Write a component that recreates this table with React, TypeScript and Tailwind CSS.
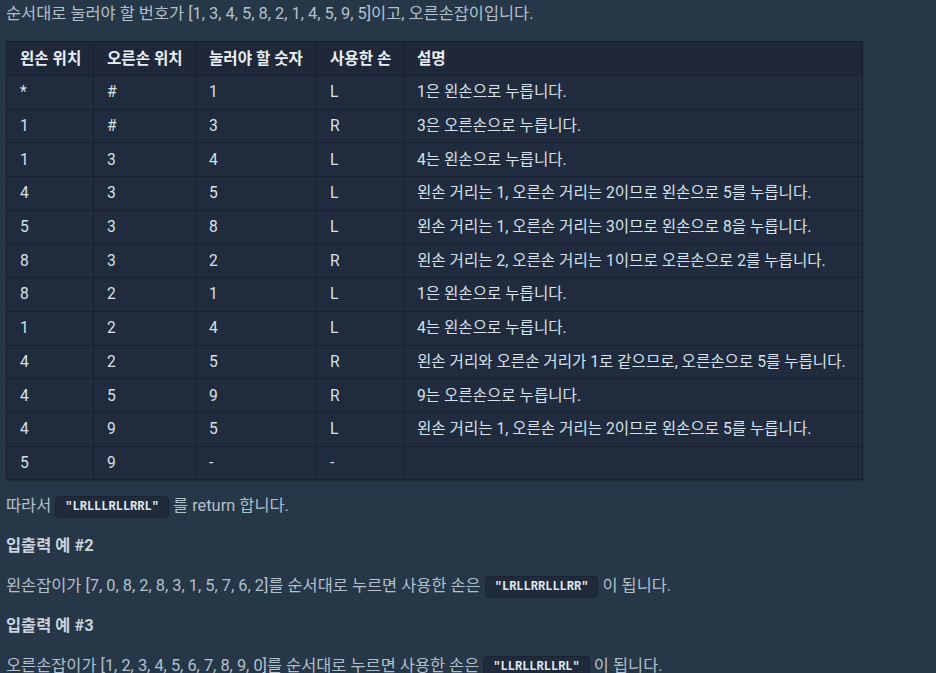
import { Fragment } from 'react'

const rows: string[][] = [
  ['*', '#', '1', 'L', '1은 왼손으로 누릅니다.'],
  ['1', '#', '3', 'R', '3은 오른손으로 누릅니다.'],
  ['1', '3', '4', 'L', '4는 왼손으로 누릅니다.'],
  ['4', '3', '5', 'L', '왼손 거리는 1, 오른손 거리는 2이므로 왼손으로 5를 누릅니다.'],
  ['5', '3', '8', 'L', '왼손 거리는 1, 오른손 거리는 3이므로 왼손으로 8을 누릅니다.'],
  ['8', '3', '2', 'R', '왼손 거리는 2, 오른손 거리는 1이므로 오른손으로 2를 누릅니다.'],
  ['8', '2', '1', 'L', '1은 왼손으로 누릅니다.'],
  ['1', '2', '4', 'L', '4는 왼손으로 누릅니다.'],
  ['4', '2', '5', 'R', '왼손 거리와 오른손 거리가 1로 같으므로, 오른손으로 5를 누릅니다.'],
  ['4', '5', '9', 'R', '9는 오른손으로 누릅니다.'],
  ['4', '9', '5', 'L', '왼손 거리는 1, 오른손 거리는 2이므로 왼손으로 5를 누릅니다.'],
  ['5', '9', '-', '-', ''],
]

const headers = ['왼손 위치', '오른손 위치', '눌러야 할 숫자', '사용한 손', '설명']

function Code({ children }: { children: string }) {
  return (
    <code className="inline-block px-[9px] h-[22px] leading-[21px] align-middle rounded-[4px] border border-[#1a2433] bg-[#1f2a3b] text-[#dfe7ee] text-[12px] font-semibold font-['Liberation_Mono',monospace]">
      {children}
    </code>
  )
}

export default function App() {
  return (
    <div className="min-h-[673px] w-full bg-[#263747] text-[#b2c0cc] text-[16.4px] leading-[24px] font-['Roboto','Noto_Sans_CJK_KR',sans-serif] pl-[6px] pt-[2px]">
      <p>순서대로 눌러야 할 번호가 [1, 3, 4, 5, 8, 2, 1, 4, 5, 9, 5]이고, 오른손잡이입니다.</p>

      <table className="mt-[15px] w-[857px] table-fixed border-collapse bg-[#202b3d] text-[#d7e2eb] text-[15.6px] shadow-[0_1px_2px_rgba(0,0,0,0.25)]">
        <colgroup>
          <col className="w-[87px]" />
          <col className="w-[102px]" />
          <col className="w-[121px]" />
          <col className="w-[87px]" />
          <col />
        </colgroup>
        <thead>
          <tr className="h-[34px] bg-[#1e2839]">
            {headers.map((h) => (
              <th key={h} className="border border-[#172030] px-[13px] text-left font-bold text-[#e9eff4] whitespace-nowrap">
                {h}
              </th>
            ))}
          </tr>
        </thead>
        <tbody>
          {rows.map((r, i) => (
            <tr key={i} className="h-[33.7px]">
              {r.map((c, j) => (
                <Fragment key={j}>
                  <td className="border border-[#172030] px-[13px] text-left whitespace-nowrap">{c}</td>
                </Fragment>
              ))}
            </tr>
          ))}
        </tbody>
      </table>

      <p className="mt-[14px]">
        따라서 <Code>"LRLLLRLLRRL"</Code> 를 return 합니다.
      </p>
      <p className="mt-[16px] font-bold text-[#c9d4dd]">입출력 예 #2</p>
      <p className="mt-[16px]">
        왼손잡이가 [7, 0, 8, 2, 8, 3, 1, 5, 7, 6, 2]를 순서대로 누르면 사용한 손은 <Code>"LRLLRRLLLRR"</Code> 이 됩니다.
      </p>
      <p className="mt-[16px] font-bold text-[#c9d4dd]">입출력 예 #3</p>
      <p className="mt-[16px]">
        오른손잡이가 [1, 2, 3, 4, 5, 6, 7, 8, 9, 0]를 순서대로 누르면 사용한 손은 <Code>"LLRLLRLLRL"</Code> 이 됩니다.
      </p>
    </div>
  )
}
